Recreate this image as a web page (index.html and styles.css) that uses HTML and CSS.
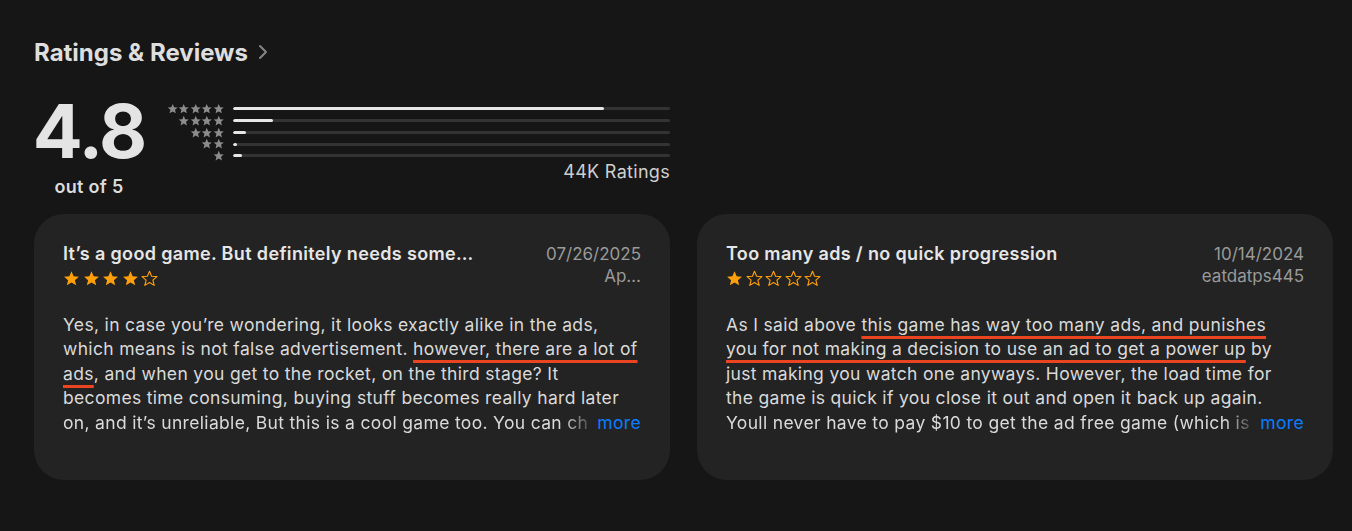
FILE: index.html
```html
<!DOCTYPE html>
<html lang="en">
<head>
<meta charset="utf-8">
<title>Ratings &amp; Reviews</title>
<link rel="stylesheet" href="styles.css">
</head>
<body>
<svg width="0" height="0" class="defs" aria-hidden="true">
  <defs>
    <symbol id="star" viewBox="0 0 24 24">
      <path d="M12 1.8l3 7 7.5.6-5.7 4.9 1.8 7.4L12 17.7l-6.6 4 1.8-7.4-5.7-4.9 7.5-.6z"/>
    </symbol>
  </defs>
</svg>
<main class="page">
  <header class="section-head">
    <h2 class="section-title">Ratings &amp; Reviews</h2>
    <svg class="chevron" viewBox="0 0 10 16" aria-hidden="true"><path d="M2 2l6 6-6 6"/></svg>
  </header>

  <section class="summary">
    <div class="score">
      <div class="score-value">4.8</div>
      <div class="score-sub">out of 5</div>
    </div>
    <div class="histogram">
      <div class="hist-row">
        <div class="hist-stars"><svg><use href="#star"/></svg><svg><use href="#star"/></svg><svg><use href="#star"/></svg><svg><use href="#star"/></svg><svg><use href="#star"/></svg></div>
        <div class="bar"><div class="bar-fill" style="width:85%"></div></div>
      </div>
      <div class="hist-row">
        <div class="hist-stars"><svg><use href="#star"/></svg><svg><use href="#star"/></svg><svg><use href="#star"/></svg><svg><use href="#star"/></svg></div>
        <div class="bar"><div class="bar-fill" style="width:9.2%"></div></div>
      </div>
      <div class="hist-row">
        <div class="hist-stars"><svg><use href="#star"/></svg><svg><use href="#star"/></svg><svg><use href="#star"/></svg></div>
        <div class="bar"><div class="bar-fill" style="width:3%"></div></div>
      </div>
      <div class="hist-row">
        <div class="hist-stars"><svg><use href="#star"/></svg><svg><use href="#star"/></svg></div>
        <div class="bar"><div class="bar-fill" style="width:1%"></div></div>
      </div>
      <div class="hist-row">
        <div class="hist-stars"><svg><use href="#star"/></svg></div>
        <div class="bar"><div class="bar-fill" style="width:2%"></div></div>
      </div>
      <div class="hist-count">44K Ratings</div>
    </div>
  </section>

  <section class="reviews">
    <article class="review">
      <div class="review-head">
        <div class="review-main">
          <h3 class="review-title">It’s a good game. But definitely needs some…</h3>
          <div class="rating">
            <svg class="full"><use href="#star"/></svg><svg class="full"><use href="#star"/></svg><svg class="full"><use href="#star"/></svg><svg class="full"><use href="#star"/></svg><svg class="empty"><use href="#star"/></svg>
          </div>
        </div>
        <div class="review-meta">
          <div class="review-date">07/26/2025</div>
          <div class="review-author">Ap…</div>
        </div>
      </div>
      <div class="review-body">
        <div class="line">Yes, in case you’re wondering, it looks exactly alike in the ads,</div>
        <div class="line">which means is not false advertisement. <span class="mark">however, there are a lot of</span></div>
        <div class="line"><span class="mark">ads</span>, and when you get to the rocket, on the third stage? It</div>
        <div class="line">becomes time consuming, buying stuff becomes really hard later</div>
        <div class="line last"><span class="clip">on, and it’s unreliable, But this is a cool game too. You can ch</span><a class="more" href="#">more</a></div>
      </div>
    </article>

    <article class="review">
      <div class="review-head">
        <div class="review-main">
          <h3 class="review-title">Too many ads / no quick progression</h3>
          <div class="rating">
            <svg class="full"><use href="#star"/></svg><svg class="empty"><use href="#star"/></svg><svg class="empty"><use href="#star"/></svg><svg class="empty"><use href="#star"/></svg><svg class="empty"><use href="#star"/></svg>
          </div>
        </div>
        <div class="review-meta">
          <div class="review-date">10/14/2024</div>
          <div class="review-author">eatdatps445</div>
        </div>
      </div>
      <div class="review-body">
        <div class="line">As I said above <span class="mark">this game has way too many ads, and punishes</span></div>
        <div class="line"><span class="mark">you for not making a decision to use an ad to get a power up</span> by</div>
        <div class="line">just making you watch one anyways. However, the load time for</div>
        <div class="line">the game is quick if you close it out and open it back up again.</div>
        <div class="line last"><span class="clip">Youll never have to pay $10 to get the ad free game (which is</span><a class="more" href="#">more</a></div>
      </div>
    </article>
  </section>
</main>
</body>
</html>
```

FILE: styles.css
```css
* { box-sizing: border-box; }

html, body {
  margin: 0;
  background: #161616;
}

body {
  font-family: Inter, "Noto Sans", "Liberation Sans", sans-serif;
  color: #e2e2e2;
  -webkit-font-smoothing: antialiased;
}

.defs { position: absolute; }

.page {
  padding: 36px 19px 0 34px;
}

.section-head {
  display: flex;
  align-items: center;
  gap: 10px;
  height: 32px;
}

.section-title {
  margin: 0;
  font-size: 24px;
  font-weight: 700;
  color: #dedede;
}

.chevron {
  width: 10px;
  height: 16px;
  fill: none;
  stroke: #858585;
  stroke-width: 2;
  stroke-linecap: round;
  stroke-linejoin: round;
}

.summary {
  display: flex;
  margin-top: 26px;
  width: 636px;
}

.score {
  display: flex;
  flex-direction: column;
  align-items: center;
  width: 110px;
}

.score-value {
  font-size: 74px;
  font-weight: 700;
  line-height: 74px;
  letter-spacing: -2px;
  color: #e4e4e4;
}

.score-sub {
  margin-top: 8px;
  font-size: 18px;
  font-weight: 600;
  letter-spacing: 0.3px;
  color: #dcdcdc;
}

.histogram {
  flex: 1;
  display: flex;
  flex-direction: column;
  margin-left: 23px;
  margin-top: 9px;
}

.hist-row {
  display: flex;
  align-items: center;
  height: 11.75px;
  gap: 9px;
}

.hist-stars {
  width: 57px;
  display: flex;
  justify-content: flex-end;
}

.hist-stars svg {
  width: 11.5px;
  height: 11.5px;
  fill: #8c8c8c;
}

.bar {
  flex: 1;
  height: 3px;
  background: #333333;
  border-radius: 2px;
  overflow: hidden;
}

.bar-fill {
  height: 100%;
  background: #e6e6e6;
  border-radius: 2px;
}

.hist-count {
  align-self: flex-end;
  font-size: 18px;
  line-height: 20px;
  letter-spacing: 0.3px;
  color: #cfcfcf;
}

.reviews {
  display: grid;
  grid-template-columns: 636px 636px;
  gap: 27px;
  margin-top: 17px;
}

.review {
  background: #232323;
  border-radius: 30px;
  height: 266px;
  padding: 28px 29px 0 29px;
}

.review-head {
  display: flex;
  justify-content: space-between;
  gap: 16px;
}

.review-title {
  margin: 0;
  font-size: 18px;
  font-weight: 600;
  letter-spacing: 0.35px;
  line-height: 24px;
  color: #e6e6e6;
  white-space: nowrap;
}

.rating {
  display: flex;
  gap: 2.6px;
  height: 24px;
  align-items: center;
}

.rating svg {
  width: 17px;
  height: 17px;
}

.rating .full { fill: #ff9f0a; }

.rating .empty {
  fill: none;
  stroke: #ff9f0a;
  stroke-width: 1.6;
  stroke-linejoin: round;
}

.review-meta {
  text-align: right;
  font-size: 17px;
  line-height: 22px;
  color: #9a9a9a;
  padding-top: 1px;
}

.review-body {
  margin-top: 23px;
  font-size: 17.5px;
  letter-spacing: 0.33px;
  line-height: 24.4px;
  color: #dadada;
}

.line { white-space: nowrap; }

.mark {
  text-decoration: underline;
  text-decoration-color: #ea4420;
  text-decoration-thickness: 3px;
  text-underline-offset: 5px;
  text-decoration-skip-ink: none;
}

.line.last {
  display: flex;
  justify-content: space-between;
}

.clip {
  -webkit-mask-image: linear-gradient(to right, #000 calc(100% - 26px), rgba(0,0,0,0.25) 100%);
  mask-image: linear-gradient(to right, #000 calc(100% - 26px), rgba(0,0,0,0.25) 100%);
}

.more {
  margin-left: 8px;
  color: #0a7cff;
  text-decoration: none;
}
```
